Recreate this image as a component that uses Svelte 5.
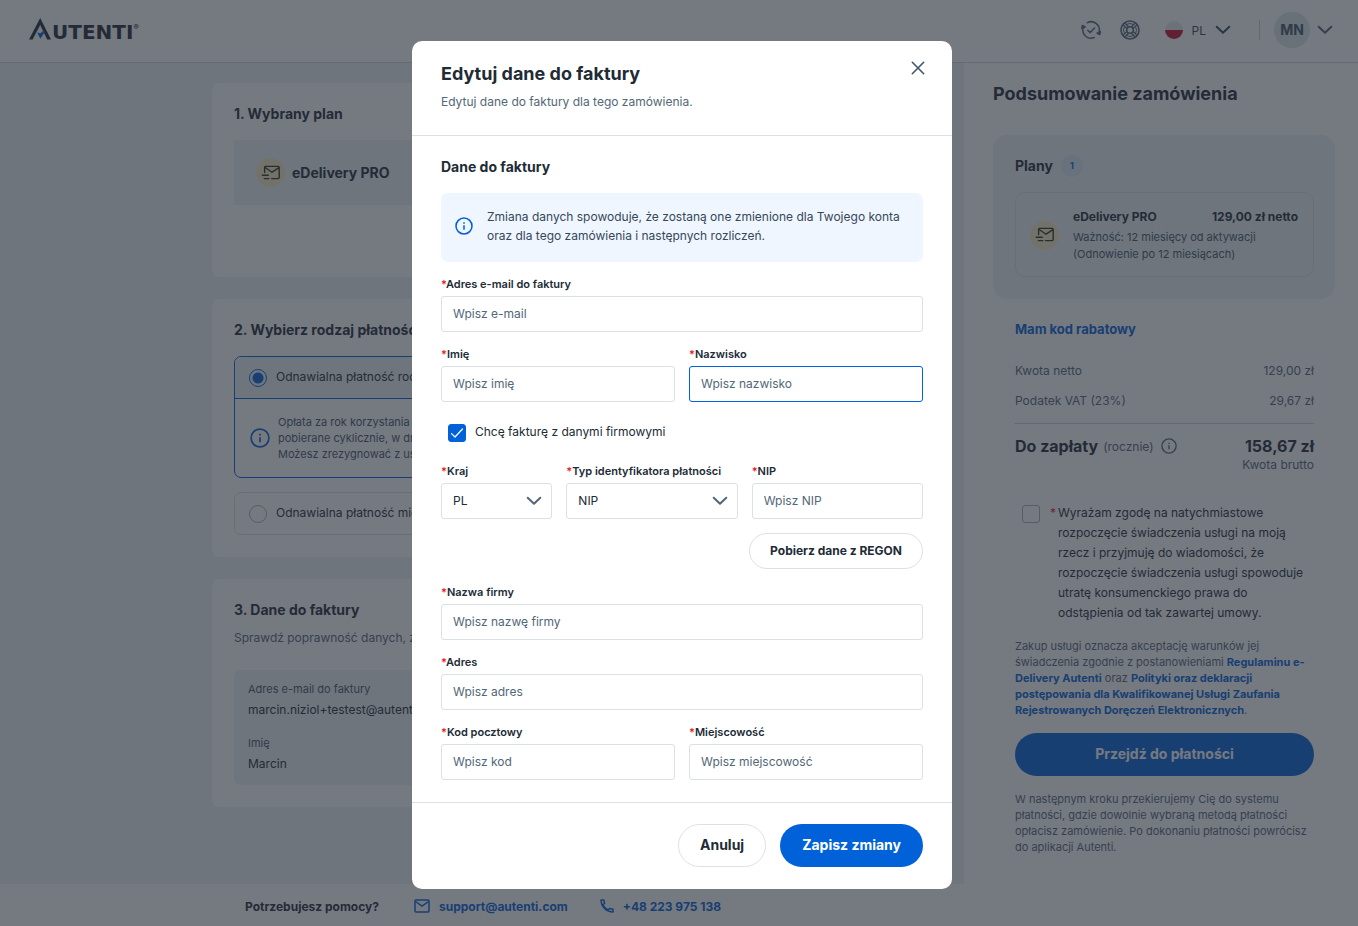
<script lang="ts">
  let email = $state('');
  let firstName = $state('');
  let lastName = $state('');
  let companyInvoice = $state(true);
  let country = $state('PL');
  let idType = $state('NIP');
  let nip = $state('');
  let companyName = $state('');
  let address = $state('');
  let postcode = $state('');
  let city = $state('');
  let payment = $state('yearly');
  let consent = $state(false);
  let open = $state(true);

  function handleSubmit(e: SubmitEvent) {
    e.preventDefault();
    open = false;
  }
</script>

{#snippet chevron()}
  <svg class="chevron" width="16" height="10" viewBox="0 0 16 10" fill="none" stroke="currentColor" stroke-width="2" stroke-linecap="round" stroke-linejoin="round" aria-hidden="true">
    <path d="M1.7 1.7 8 7.8l6.3-6.1" />
  </svg>
{/snippet}

{#snippet info(size: number)}
  <svg class="info-icon" width={size} height={size} viewBox="0 0 20 20" fill="none" stroke="currentColor" stroke-width="1.7" aria-hidden="true">
    <circle cx="10" cy="10" r="8.9" />
    <path d="M10 9.2v5M10 5.8v1.8" />
  </svg>
{/snippet}

{#snippet planIcon()}
  <span class="plan-icon">
    <svg width="20" height="16" viewBox="0 0 20 16" fill="none" stroke="currentColor" stroke-width="1.4" stroke-linecap="round" stroke-linejoin="round" aria-hidden="true">
      <path d="M3.6 7.6V2.2c0-.5.3-.8.8-.8h12.800c.6 0 1 .4 1 1v10.200c0 .6-.4 1-1 1H10.600M3.800 2.200l7.200 5 7-4.500M1.300 10.200h6M3.300 13.600h4.600" />
    </svg>
  </span>
{/snippet}

{#snippet label(id: string, text: string)}
  <label class="field-label" for={id}><span class="star">*</span>{text}</label>
{/snippet}

<div class="page">
  <header class="topbar">
    <a class="logo" href="#home" aria-label="Autenti">
      <svg width="23" height="23" viewBox="0 0 23 23" aria-hidden="true">
        <path d="M0 21.500 11.200 0 22 21.500h-3.800L11.200 7 3.600 21.500z" fill="#212b36" />
        <path d="M8.200 14.600l3.300.6 3.200-3 .2 3.200-3.600 5.400z" fill="#0061d9" />
      </svg>
      <span class="logo-text">UTENTI</span><span class="logo-mark">®</span>
    </a>
    <div class="tools">
      <button class="tool" aria-label="Status">
        <svg width="20" height="20" viewBox="0 0 20 20" fill="none" stroke="currentColor" stroke-width="1.5" stroke-linecap="round" stroke-linejoin="round">
          <path d="M6.300 2.700A8.200 8.200 0 0 1 18.200 11.500M13.200 17.500A8.200 8.200 0 0 1 2 8" />
          <path d="M6.800 10.200 9.200 12.600 13.600 8" />
          <path d="M.8 8.300 1.400 5.400 4.200 7zM19.400 11.800l-.7 2.800-2.700-1.400z" fill="currentColor" />
        </svg>
      </button>
      <button class="tool" aria-label="Pomoc">
        <svg width="20" height="20" viewBox="0 0 20 20" fill="none" stroke="currentColor" stroke-width="1.6">
          <circle cx="10" cy="10" r="9" />
          <circle cx="10" cy="10" r="3.300" />
          <path d="M3 4.800 7 8.600M4.800 3 8.600 7M17 4.800l-4 3.800M15.200 3l-3.800 4M3 15.200l4-3.800M4.800 17l3.800-4M17 15.200l-4-3.800M15.200 17l-3.800-4" stroke-width="1.3" />
          <path d="M7 4.300a6.500 6.500 0 0 1 6 0M7 15.700a6.500 6.500 0 0 0 6 0M4.300 7a6.500 6.500 0 0 0 0 6M15.700 7a6.500 6.500 0 0 1 0 6" stroke-width="1" />
        </svg>
      </button>
      <button class="lang">
        <span class="flag"></span>
        <span>PL</span>
        {@render chevron()}
      </button>
      <span class="divider"></span>
      <button class="account">
        <span class="avatar">MN</span>
        {@render chevron()}
      </button>
    </div>
  </header>

  <div class="content">
    <main class="main">
      <div class="column">
        <section class="card plan-card">
          <h2>1. Wybrany plan</h2>
          <div class="plan-row">
            {@render planIcon()}
            <strong>eDelivery PRO</strong>
          </div>
        </section>

        <section class="card">
          <h2>2. Wybierz rodzaj płatności</h2>
          <div class="option selected">
            <label class="option-head">
              <input type="radio" name="payment" value="yearly" bind:group={payment} />
              <span>Odnawialna płatność roczna</span>
            </label>
            <div class="option-info">
              {@render info(20)}
              <p>
                Opłata za rok korzystania z usługi oraz opłaty są<br />
                pobierane cyklicznie, w dniu odnowienia.<br />
                Możesz zrezygnować z usługi w każdej chwili.
              </p>
            </div>
          </div>
          <div class="option">
            <label class="option-head">
              <input type="radio" name="payment" value="monthly" bind:group={payment} />
              <span>Odnawialna płatność miesięczna</span>
            </label>
          </div>
        </section>

        <section class="card">
          <h2>3. Dane do faktury</h2>
          <p class="lead">Sprawdź poprawność danych, zanim przejdziesz dalej.</p>
          <dl class="summary">
            <dt>Adres e-mail do faktury</dt>
            <dd>marcin.niziol+testest@autenti.com</dd>
            <dt>Imię</dt>
            <dd>Marcin</dd>
          </dl>
        </section>
      </div>
    </main>

    <aside class="sidebar">
      <h1>Podsumowanie zamówienia</h1>
      <div class="plans">
        <h2>Plany <span class="badge">1</span></h2>
        <div class="plan-item">
          {@render planIcon()}
          <div class="plan-text">
            <div class="plan-head">
              <strong>eDelivery PRO</strong>
              <strong>129,00 zł netto</strong>
            </div>
            <p>Ważność: 12 miesięcy od aktywacji<br />(Odnowienie po 12 miesiącach)</p>
          </div>
        </div>
      </div>

      <div class="totals">
        <a class="discount" href="#kod">Mam kod rabatowy</a>
        <div class="line"><span>Kwota netto</span><span>129,00 zł</span></div>
        <div class="line"><span>Podatek VAT (23%)</span><span>29,67 zł</span></div>
        <div class="total">
          <div class="total-label">
            <strong>Do zapłaty</strong>
            <span>(rocznie)</span>
            {@render info(16)}
          </div>
          <div class="total-value">
            <strong>158,67 zł</strong>
            <span>Kwota brutto</span>
          </div>
        </div>

        <label class="consent">
          <input type="checkbox" class="box" bind:checked={consent} />
          <span class="star">*</span>
          <span>
            Wyrażam zgodę na natychmiastowe<br />
            rozpoczęcie świadczenia usługi na moją<br />
            rzecz i przyjmuję do wiadomości, że<br />
            rozpoczęcie świadczenia usługi spowoduje<br />
            utratę konsumenckiego prawa do<br />
            odstąpienia od tak zawartej umowy.
          </span>
        </label>

        <p class="small">
          Zakup usługi oznacza akceptację warunków jej<br />
          świadczenia zgodnie z postanowieniami <a href="#regulamin">Regulaminu e-<br />Delivery Autenti</a> oraz
          <a href="#polityki">Polityki oraz deklaracji<br />postępowania dla Kwalifikowanej Usługi Zaufania<br />Rejestrowanych Doręczeń Elektronicznych</a>.
        </p>
        <button class="btn primary pay">Przejdź do płatności</button>
        <p class="small">
          W następnym kroku przekierujemy Cię do systemu<br />
          płatności, gdzie dowolnie wybraną metodą płatności<br />
          opłacisz zamówienie. Po dokonaniu płatności powrócisz<br />
          do aplikacji Autenti.
        </p>
      </div>
    </aside>
  </div>

  <footer class="help">
    <strong>Potrzebujesz pomocy?</strong>
    <a href="mailto:support@autenti.com">
      <svg width="16" height="14" viewBox="0 0 16 14" fill="none" stroke="currentColor" stroke-width="1.5" stroke-linejoin="round" aria-hidden="true">
        <rect x="1" y="1" width="14" height="12" rx="1" />
        <path d="M1.500 2.500 8 7.200l6.500-4.700" />
      </svg>
      support@autenti.com
    </a>
    <a href="tel:+48223975138">
      <svg width="14" height="14" viewBox="0 0 14 14" fill="none" stroke="currentColor" stroke-width="1.5" stroke-linejoin="round" aria-hidden="true">
        <path d="M1 1h2.800l.8 3.300-1.700 1.500c1 2.300 2.800 4.200 5.200 5.300l1.600-1.600 3.300.8V13C6.600 13 1 7.400 1 1z" />
      </svg>
      +48 223 975 138
    </a>
  </footer>
</div>

{#if open}
  <div class="backdrop">
    <div class="modal" role="dialog" aria-modal="true" aria-labelledby="modal-title">
      <div class="modal-header">
        <div>
          <h2 id="modal-title">Edytuj dane do faktury</h2>
          <p>Edytuj dane do faktury dla tego zamówienia.</p>
        </div>
        <button class="close" aria-label="Zamknij" onclick={() => (open = false)}>
          <svg width="14" height="14" viewBox="0 0 14 14" fill="none" stroke="currentColor" stroke-width="1.6" stroke-linecap="round">
            <path d="M1.300 1.300l11.400 11.400M12.700 1.300 1.300 12.700" />
          </svg>
        </button>
      </div>

      <form onsubmit={handleSubmit}>
        <div class="modal-body">
          <h3>Dane do faktury</h3>
          <div class="notice">
            {@render info(18)}
            <p>
              Zmiana danych spowoduje, że zostaną one zmienione dla Twojego konta<br />
              oraz dla tego zamówienia i następnych rozliczeń.
            </p>
          </div>

          <div class="field">
            {@render label('email', 'Adres e-mail do faktury')}
            <input id="email" type="email" placeholder="Wpisz e-mail" bind:value={email} />
          </div>
          <div class="row halves">
            <div class="field">
              {@render label('first-name', 'Imię')}
              <input id="first-name" type="text" placeholder="Wpisz imię" bind:value={firstName} />
            </div>
            <div class="field">
              {@render label('last-name', 'Nazwisko')}
              <input id="last-name" class="active" type="text" placeholder="Wpisz nazwisko" bind:value={lastName} />
            </div>
          </div>

          <label class="company">
            <span class="check">
              <input type="checkbox" class="box" bind:checked={companyInvoice} />
              {#if companyInvoice}
                <svg width="18" height="18" viewBox="0 0 18 18" fill="none" stroke="#fff" stroke-width="1.2" stroke-linecap="round" stroke-linejoin="round" aria-hidden="true">
                  <path d="M3.500 9.600 7 13l7.500-8" />
                </svg>
              {/if}
            </span>
            <span>Chcę fakturę z danymi firmowymi</span>
          </label>

          <div class="row thirds">
            <div class="field">
              {@render label('country', 'Kraj')}
              <div class="select">
                <select id="country" bind:value={country}>
                  <option>PL</option>
                  <option>DE</option>
                </select>
                {@render chevron()}
              </div>
            </div>
            <div class="field">
              {@render label('id-type', 'Typ identyfikatora płatności')}
              <div class="select">
                <select id="id-type" bind:value={idType}>
                  <option>NIP</option>
                  <option>REGON</option>
                </select>
                {@render chevron()}
              </div>
            </div>
            <div class="field">
              {@render label('nip', 'NIP')}
              <input id="nip" type="text" placeholder="Wpisz NIP" bind:value={nip} />
            </div>
          </div>

          <div class="regon">
            <button type="button" class="btn outline compact">Pobierz dane z REGON</button>
          </div>

          <div class="field">
            {@render label('company-name', 'Nazwa firmy')}
            <input id="company-name" type="text" placeholder="Wpisz nazwę firmy" bind:value={companyName} />
          </div>
          <div class="field">
            {@render label('address', 'Adres')}
            <input id="address" type="text" placeholder="Wpisz adres" bind:value={address} />
          </div>
          <div class="row halves">
            <div class="field">
              {@render label('postcode', 'Kod pocztowy')}
              <input id="postcode" type="text" placeholder="Wpisz kod" bind:value={postcode} />
            </div>
            <div class="field">
              {@render label('city', 'Miejscowość')}
              <input id="city" type="text" placeholder="Wpisz miejscowość" bind:value={city} />
            </div>
          </div>
        </div>

        <div class="modal-footer">
          <button type="button" class="btn outline" onclick={() => (open = false)}>Anuluj</button>
          <button type="submit" class="btn primary">Zapisz zmiany</button>
        </div>
      </form>
    </div>
  </div>
{/if}

<style>
  :global(body) {
    background: #fff;
    font-family: Inter, 'Noto Sans', sans-serif;
    font-size: 12px;
    color: #212b36;
  }

  h1, h2, h3, p, dl, dd {
    margin: 0;
  }

  button, input, select {
    font: inherit;
    color: inherit;
    box-sizing: border-box;
  }

  button {
    background: none;
    border: none;
    padding: 0;
    cursor: pointer;
  }

  a {
    color: #0061d9;
    font-weight: 700;
    text-decoration: none;
  }

  svg {
    flex-shrink: 0;
  }

  .page {
    --muted: #526778;
    --line: #dce1e6;
    --soft: #ecf4f5;
    display: flex;
    flex-direction: column;
    min-height: 100vh;
  }

  .topbar {
    display: flex;
    align-items: center;
    justify-content: space-between;
    box-sizing: border-box;
    height: 63px;
    padding: 0 25px 2px 29px;
    border-bottom: 1px solid #c9d8dd;
  }

  .logo {
    display: flex;
    align-items: flex-start;
    color: #212b36;
    margin-bottom: 2px;
  }

  .logo-text {
    font-family: 'DejaVu Sans', sans-serif;
    font-size: 20px;
    line-height: 28px;
    height: 22px;
  }

  .logo-mark {
    font-size: 8px;
    line-height: 18px;
  }

  .tools {
    display: flex;
    align-items: center;
    color: #526778;
    gap: 19px;
  }

  .tool {
    display: flex;
  }

  .lang {
    display: flex;
    align-items: center;
    gap: 9px;
    margin-left: 6px;
    color: #36475a;
  }

  .flag {
    width: 18px;
    height: 18px;
    border-radius: 50%;
    background: linear-gradient(#e9e9e9 50%, #c8102e 50%);
  }

  .divider {
    width: 1px;
    height: 20px;
    margin: 0 -5px 0 9px;
    background: #c9d3da;
  }

  .account {
    display: flex;
    align-items: center;
    gap: 7px;
  }

  .avatar {
    width: 36px;
    height: 36px;
    border-radius: 50%;
    background: #dbe6ea;
    line-height: 35px;
    font-size: 14px;
    font-weight: 700;
    color: #42566a;
  }

  .content {
    display: flex;
    flex: 1;
  }

  .main {
    flex: 1;
    padding: 20px 0;
    background: var(--soft);
  }

  .column {
    display: flex;
    flex-direction: column;
    gap: 22px;
    max-width: 540px;
    margin: 0 auto;
  }

  .card {
    padding: 21px 22px 22px;
    border-radius: 7px;
    background: #fff;
  }

  .card h2 {
    font-size: 14px;
    line-height: 20px;
    margin-bottom: 16px;
  }

  .plan-card {
    padding-bottom: 72px;
  }

  .plan-row {
    display: flex;
    align-items: center;
    gap: 7px;
    height: 65px;
    padding: 0 22px;
    background: var(--soft);
    font-size: 14px;
  }

  .plan-icon {
    display: flex;
    align-items: center;
    justify-content: center;
    flex-shrink: 0;
    width: 29px;
    height: 29px;
    border-radius: 50%;
    background: #f9ecc4;
    color: #33301c;
  }

  .option {
    border: 1px solid var(--line);
    border-radius: 7px;
    overflow: hidden;
  }

  .option + .option {
    margin-top: 14px;
  }

  .option-head {
    display: flex;
    align-items: center;
    gap: 9px;
    height: 41px;
    padding: 0 14px;
  }

  .option-head span {
    padding-bottom: 2px;
  }

  .option.selected {
    border-color: #0061d9;
  }

  .selected .option-head {
    background: var(--soft);
    border-bottom: 1px solid #0061d9;
  }

  .option-head input {
    appearance: none;
    width: 18px;
    height: 18px;
    margin: 0;
    border: 1px solid #a5b1bc;
    border-radius: 50%;
  }

  .option-head input:checked {
    border-color: #0061d9;
    background: radial-gradient(circle, #0061d9 5px, transparent 6px);
  }

  .option-info {
    display: flex;
    align-items: center;
    gap: 8px;
    padding: 15px;
    color: #0061d9;
  }

  .option-info p {
    font-size: 11px;
    line-height: 16px;
    color: #42566a;
    white-space: nowrap;
  }

  .lead {
    font-size: 12px;
    line-height: 20px;
    margin-top: -8px;
    color: var(--muted);
  }

  .summary {
    margin-top: 22px;
    padding: 9px 14px 10px;
    border-radius: 7px;
    background: var(--soft);
  }

  .summary dt {
    font-size: 11px;
    line-height: 20px;
    color: #42566a;
  }

  .summary dd {
    font-size: 12px;
    line-height: 22px;
  }

  .summary dd + dt {
    margin-top: 12px;
  }

  .sidebar {
    width: 342px;
    padding: 20px 23px 20px 29px;
    background: #fff;
  }

  .sidebar h1 {
    font-size: 18px;
    line-height: 22px;
    margin-bottom: 30px;
  }

  .plans {
    padding: 20px 21px 22px 22px;
    border-radius: 14px;
    background: var(--soft);
  }

  .plans h2 {
    display: flex;
    align-items: center;
    gap: 8px;
    font-size: 14px;
    line-height: 22px;
    margin-bottom: 15px;
  }

  .badge {
    width: 22px;
    height: 22px;
    border-radius: 50%;
    background: #dcebfa;
    color: #0061d9;
    font-size: 9px;
    line-height: 22px;
    text-align: center;
  }

  .plan-item {
    display: flex;
    align-items: center;
    gap: 14px;
    padding: 14px 15px 13px 14px;
    border: 1px solid var(--line);
    border-radius: 10px;
  }

  .plan-text {
    flex: 1;
    font-size: 12px;
    line-height: 20px;
  }

  .plan-head {
    display: flex;
    justify-content: space-between;
  }

  .plan-text p {
    margin-top: 2px;
    font-size: 11px;
    line-height: 17px;
    color: #42566a;
    white-space: nowrap;
  }

  .totals {
    padding: 20px 21px 0 22px;
  }

  .discount {
    display: block;
    font-size: 13px;
    line-height: 20px;
    margin-bottom: 22px;
  }

  .line {
    display: flex;
    justify-content: space-between;
    line-height: 20px;
    margin-bottom: 10px;
    color: var(--muted);
  }

  .total {
    display: flex;
    justify-content: space-between;
    margin-top: 12px;
    padding-top: 12px;
    border-top: 1px solid #c9d3da;
    color: var(--muted);
  }

  .total strong {
    font-size: 16px;
    line-height: 20px;
    color: #212b36;
  }

  .total-label {
    display: flex;
    align-items: center;
    gap: 5px;
    height: 20px;
  }

  .total-label :global(svg) {
    margin-left: 2px;
  }

  .total-value {
    display: flex;
    flex-direction: column;
    align-items: flex-end;
    line-height: 18px;
  }

  .star {
    color: #e5202b;
  }

  .consent {
    display: flex;
    margin: 29px 0 15px 7px;
    line-height: 20px;
    white-space: nowrap;
  }

  .consent .star {
    width: 8px;
    margin-left: 10px;
  }

  .box {
    appearance: none;
    flex-shrink: 0;
    width: 18px;
    height: 18px;
    margin: 0;
    border: 1px solid #a5b1bc;
    border-radius: 3px;
  }

  .consent .box {
    margin-top: 2px;
  }

  .box:checked {
    background: #0061d9;
    border-color: #0061d9;
  }

  .small {
    font-size: 11px;
    line-height: 16px;
    color: var(--muted);
    white-space: nowrap;
  }

  .btn {
    height: 43px;
    padding: 0 21px 2px;
    border: 1px solid transparent;
    border-radius: 22px;
    font-size: 14px;
    font-weight: 700;
  }

  .btn.primary {
    background: #0061d9;
    color: #fff;
  }

  .btn.outline {
    border-color: #dce1e6;
  }

  .btn.compact {
    height: 36px;
    padding: 0 20px 2px;
    font-size: 12px;
  }

  .btn.pay {
    display: block;
    width: 100%;
    margin: 15px 0;
  }

  .help {
    display: flex;
    align-items: center;
    gap: 32px;
    height: 42px;
    padding: 2px 245px 0;
    box-sizing: border-box;
    font-size: 12px;
  }

  .help strong {
    margin-right: 3px;
  }

  .help a {
    display: flex;
    align-items: center;
    gap: 9px;
  }

  .backdrop {
    position: fixed;
    inset: 0;
    display: flex;
    align-items: center;
    justify-content: center;
    padding: 4px 0 0 6px;
    background: rgba(38, 44, 55, 0.635);
  }

  .modal {
    width: 540px;
    max-width: 100%;
    border-radius: 10px;
    background: #fff;
  }

  .modal-header {
    display: flex;
    align-items: flex-start;
    justify-content: space-between;
    padding: 20px 27px 23px 29px;
    border-bottom: 1px solid #dce1e6;
  }

  .modal-header h2 {
    font-size: 18px;
    line-height: 26px;
    margin-bottom: 5px;
  }

  .modal-header p {
    line-height: 20px;
    color: #526778;
  }

  .close {
    display: flex;
    color: #42566a;
  }

  .modal-body {
    display: flex;
    flex-direction: column;
    gap: 14px;
    padding: 21px 29px 22px;
  }

  .modal-body h3 {
    font-size: 14px;
    line-height: 20px;
    padding-bottom: 2px;
  }

  .notice {
    display: flex;
    align-items: center;
    gap: 14px;
    padding: 14px 14px 17px;
    border-radius: 7px;
    background: #eff6ff;
    color: #0061d9;
  }

  .notice p {
    line-height: 19px;
    color: #36475a;
    white-space: nowrap;
  }

  .field {
    display: flex;
    flex-direction: column;
    gap: 4px;
    min-width: 0;
  }

  .field-label {
    font-size: 11px;
    line-height: 16px;
    font-weight: 600;
    white-space: nowrap;
  }

  .field input,
  .field select {
    width: 100%;
    height: 36px;
    padding: 0 11px 2px;
    border: 1px solid #dce1e6;
    border-radius: 3px;
    background: #fff;
    outline: none;
  }

  .field input::placeholder {
    color: #526778;
    opacity: 1;
  }

  .field input.active,
  .field input:focus {
    border-color: #0061d9;
  }

  .row {
    display: grid;
    gap: 14px;
  }

  .halves {
    grid-template-columns: 1fr 1fr;
  }

  .thirds {
    grid-template-columns: 13fr 20fr 20fr;
  }

  .select {
    position: relative;
  }

  .select select {
    appearance: none;
  }

  .select :global(.chevron) {
    position: absolute;
    top: 13px;
    right: 10px;
    color: #526778;
    pointer-events: none;
  }

  .company {
    display: flex;
    align-items: center;
    gap: 9px;
    height: 33px;
    padding-left: 7px;
  }

  .company > span:last-child {
    padding-bottom: 2px;
  }

  .check {
    position: relative;
    display: flex;
  }

  .check svg {
    position: absolute;
    inset: 0;
    pointer-events: none;
  }

  .regon {
    display: flex;
    justify-content: flex-end;
    height: 37px;
  }

  .modal-footer {
    display: flex;
    justify-content: flex-end;
    gap: 14px;
    padding: 21px 29px 22px;
    border-top: 1px solid #dce1e6;
  }
</style>
